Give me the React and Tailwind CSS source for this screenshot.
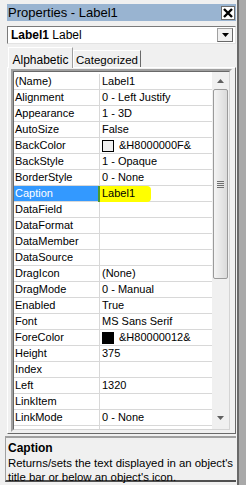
import React from 'react';

const rows = [
  ['(Name)', 'Label1'],
  ['Alignment', '0 - Left Justify'],
  ['Appearance', '1 - 3D'],
  ['AutoSize', 'False'],
  ['BackColor', '&H8000000F&', '#f0f0f0'],
  ['BackStyle', '1 - Opaque'],
  ['BorderStyle', '0 - None'],
  ['Caption', 'Label1'],
  ['DataField', ''],
  ['DataFormat', ''],
  ['DataMember', ''],
  ['DataSource', ''],
  ['DragIcon', '(None)'],
  ['DragMode', '0 - Manual'],
  ['Enabled', 'True'],
  ['Font', 'MS Sans Serif'],
  ['ForeColor', '&H80000012&', '#000000'],
  ['Height', '375'],
  ['Index', ''],
  ['Left', '1320'],
  ['LinkItem', ''],
  ['LinkMode', '0 - None'],
];

function Row({ name, value, swatch }) {
  const selected = name === 'Caption';
  return (
    <div className="flex h-[16px] border-b border-[#d8d8d8] leading-[15px]">
      <div
        className={
          'w-[86px] shrink-0 border-r border-[#d8d8d8] pl-[1px] ' +
          (selected ? 'bg-[#3399ff] text-white' : 'text-black')
        }
      >
        {name}
      </div>
      <div className="relative flex-1 pl-[2px] text-black">
        {selected && (
          <div className="absolute left-[-2px] top-[0px] h-[16px] w-[53px] rounded-r-[4px] bg-[#ffff00]">
            <div className="h-full w-[2px] bg-[#4c9a2a]" />
          </div>
        )}
        <div className="relative flex items-center">
          {swatch && (
            <span
              className="mr-[5px] mt-[1px] inline-block h-[12px] w-[12px] border border-black"
              style={{ backgroundColor: swatch }}
            />
          )}
          <span>{value}</span>
        </div>
      </div>
    </div>
  );
}

export default function App() {
  return (
    <div
      className="flex h-[485px] w-[246px] overflow-hidden bg-[#f0f0f0] text-[11px]"
      style={{ fontFamily: '"Liberation Sans", Arial, sans-serif' }}
    >
      <div className="flex w-[237px] flex-col pl-[7px] pr-[1px]">
        {/* title bar */}
        <div className="mt-[4px] flex h-[17px] items-center justify-between bg-[#99b4d1] pl-[1px] pr-[1px]">
          <span className="text-[13px] leading-none text-black">Properties - Label1</span>
          <div className="flex h-[14px] w-[14px] items-center justify-center border border-[#6d6d6d] bg-white">
            <svg width="10" height="10" viewBox="0 0 10 10">
              <path d="M1 1 L9 9 M9 1 L1 9" stroke="#000" strokeWidth="2.4" />
            </svg>
          </div>
        </div>

        {/* object dropdown */}
        <div className="mt-[5px] flex h-[18px] items-center border border-[#7a7a7a] border-r-[#e3e3e3] border-b-[#e3e3e3] bg-white pl-[3px] pr-[2px]">
          <span className="flex-1 text-[12px] leading-none text-black">
            <b>Label1</b> Label
          </span>
          <div className="flex h-[14px] w-[16px] items-center justify-center border border-[#a0a0a0] border-r-[#696969] border-b-[#696969] bg-[#f0f0f0]">
            <svg width="7" height="4" viewBox="0 0 7 4">
              <path d="M0 0 H7 L3.5 4 Z" fill="#000" />
            </svg>
          </div>
        </div>

        {/* tabs */}
        <div className="mt-[3px] flex h-[20px] items-end pl-[1px] whitespace-nowrap">
          <div className="relative z-10 mb-[-1px] flex h-[21px] w-[65px] items-start justify-center border border-b-0 border-[#a0a0a0] border-t-white border-l-white bg-[#f0f0f0] pt-[3px] text-[12px] text-black">
            Alphabetic
          </div>
          <div className="flex h-[17px] w-[68px] items-start justify-center border border-b-0 border-[#696969] border-t-white border-l-white bg-[#f0f0f0] pt-[1px] text-[11.5px] text-black">
            Categorized
          </div>
        </div>

        {/* tab page */}
        <div className="flex h-[367px] flex-col border border-white border-r-[#696969] border-b-[#696969] px-[3px] pt-[1px]">
          <div className="flex h-[363px] border-2 border-[#a0a0a0] border-r-[#f0f0f0] border-b-[#f0f0f0]">
            <div className="flex flex-1 border border-[#696969] border-r-[#d4d4d4] border-b-[#d4d4d4] bg-white">
              <div className="flex-1 overflow-hidden pt-[2px]">
                {rows.map(([n, v, s]) => (
                  <Row key={n} name={n} value={v} swatch={s} />
                ))}
                <div className="flex h-[16px]">
                  <div className="w-[86px] border-r border-[#d8d8d8]" />
                </div>
              </div>
              {/* scrollbar */}
              <div className="flex w-[17px] flex-col bg-[#f0f0f0]">
                <div className="flex h-[17px] items-center justify-center">
                  <svg width="7" height="4" viewBox="0 0 7 4">
                    <path d="M3.5 0 L7 4 H0 Z" fill="#606060" />
                  </svg>
                </div>
                <div className="mx-[1px] flex h-[190px] items-center justify-center rounded-[2px] border border-[#9a9a9a] bg-[linear-gradient(to_right,#f4f4f4,#dadada)]">
                  <div className="flex flex-col gap-[1px]">
                    <div className="h-[1px] w-[7px] bg-[#6f6f6f]" />
                    <div className="h-[1px] w-[7px] bg-[#6f6f6f]" />
                    <div className="h-[1px] w-[7px] bg-[#6f6f6f]" />
                    <div className="h-[1px] w-[7px] bg-[#6f6f6f]" />
                  </div>
                </div>
                <div className="flex-1" />
                <div className="flex h-[17px] items-center justify-center pb-[6px]">
                  <svg width="7" height="4" viewBox="0 0 7 4">
                    <path d="M0 0 H7 L3.5 4 Z" fill="#606060" />
                  </svg>
                </div>
              </div>
            </div>
          </div>
        </div>

        {/* description */}
        <div className="ml-[-2px] mt-[2px] h-[46px] border-t-2 border-l border-[#a0a0a0] border-b-2 border-b-[#505050] pl-[2px] pt-[3px] text-[11.4px] leading-[14.5px] text-black whitespace-nowrap">
          <div className="text-[12px] font-bold">Caption</div>
          <div>Returns/sets the text displayed in an object's</div>
          <div>title bar or below an object's icon.</div>
        </div>
      </div>
      <div className="w-[9px] border-l-2 border-[#696969] bg-[#a9a9a9]" />
    </div>
  );
}
